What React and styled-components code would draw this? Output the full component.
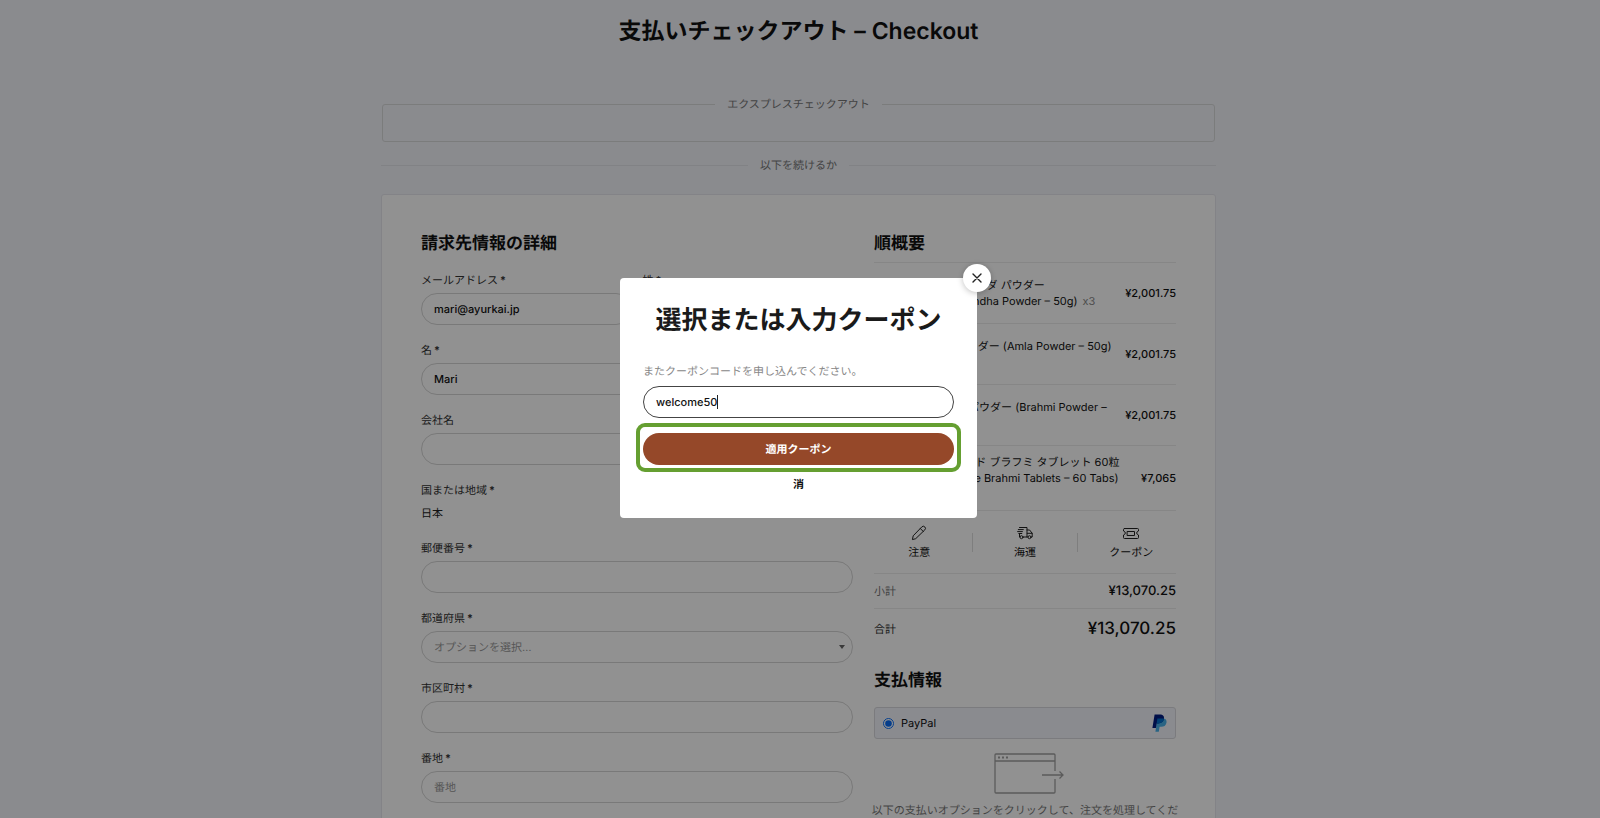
import React from 'react';
import styled, { createGlobalStyle } from 'styled-components';

const GlobalStyle = createGlobalStyle`
  *, *::before, *::after {
    box-sizing: border-box;
  }
  body {
    margin: 0;
    height: 100vh;
    overflow: hidden;
    background: #f2f4fa;
    color: #111;
    font-family: Inter, "Noto Sans CJK JP", sans-serif;
    font-size: 11px;
    line-height: 16px;
    text-rendering: geometricPrecision;
  }
  input, select, button {
    font: inherit;
    color: inherit;
    text-rendering: inherit;
  }
`;

const Page = styled.main`
  width: 100%;
  max-width: 838px;
  margin: 0 auto;
  padding: 12px 3px 0 0;
`;

const PageTitle = styled.h1`
  margin: 0 0 46px;
  font-size: 23px;
  line-height: 38px;
  font-weight: 600;
  text-align: center;
`;

const Express = styled.fieldset`
  margin: 0 1px;
  padding: 0;
  height: 46px;
  min-width: 0;
  border: 1px solid #d9dada;
  border-radius: 3px;
  color: #777;
`;

const Legend = styled.legend`
  margin: 0 auto;
  padding: 0 12px;
`;

const Or = styled.div`
  display: flex;
  align-items: center;
  gap: 12px;
  margin: 15px 0 21px;
  color: #777;

  &::before,
  &::after {
    content: '';
    flex: 1;
    border-top: 1px solid #e3e5ea;
  }
`;

const Card = styled.form`
  display: grid;
  grid-template-columns: 432fr 302fr;
  column-gap: 21px;
  padding: 36px 39px 40px;
  background: #fff;
  border: 1px solid #e6e7ee;
  border-radius: 3px;
`;

const Heading = styled.h2`
  margin: 0;
  font-size: 17px;
  line-height: 26px;
  font-weight: 600;
`;

const Fields = styled.div`
  display: grid;
  grid-template-columns: 1fr 1fr;
  gap: 17px 11px;
  margin-top: 15px;
`;

const Field = styled.div`
  display: flex;
  flex-direction: column;
  gap: 5px;
  grid-column: ${(props) => (props.$half ? 'auto' : '1 / -1')};
`;

const Label = styled.label`
  color: #333;
`;

const Required = styled.span`
  margin-left: 2px;
  font-weight: 600;
`;

const Input = styled.input`
  width: 100%;
  height: 32px;
  padding: 0 12px;
  background: transparent;
  border: 1px solid #d5d5d5;
  border-radius: 16px;
  outline: none;
  font-weight: 500;

  &::placeholder {
    color: #999;
    font-weight: 400;
  }
`;

const SelectBox = styled.div`
  display: grid;
  align-items: center;

  select, svg {
    grid-area: 1 / 1;
  }
  svg {
    justify-self: end;
    margin-right: 8px;
    pointer-events: none;
  }
`;

const Select = styled.select`
  width: 100%;
  height: 32px;
  padding: 0 12px;
  appearance: none;
  background: transparent;
  border: 1px solid #d5d5d5;
  border-radius: 16px;
  color: #999;
`;

const Country = styled.output`
  margin: 2px 0;
  color: #222;
`;

const Items = styled.ul`
  list-style: none;
  margin: 5px 0 0;
  padding: 0;
  border-top: 1px solid #ececec;
`;

const Item = styled.li`
  display: flex;
  align-items: center;
  gap: 3px;
  padding: 8px 0;
  border-bottom: 1px solid #ececec;
`;

const Thumb = styled.div`
  flex: none;
  width: 44px;
  height: 44px;
`;

const ItemName = styled.div`
  flex: 1;
  white-space: nowrap;
`;

const Qty = styled.span`
  margin-left: 5px;
  color: #888;
`;

const Price = styled.span`
  font-weight: 500;
  font-size: ${(props) => props.$size || 11}px;
`;

const Actions = styled.div`
  display: grid;
  grid-template-columns: repeat(3, 1fr);
  align-items: center;
  height: 62px;
  margin: 0 -8px 0 -7px;
`;

const Action = styled.button`
  display: flex;
  flex-direction: column;
  align-items: center;
  gap: 3px;
  padding: 0;
  background: none;
  border: 0;
`;

const ActionCell = styled.div`
  display: grid;
  grid-template-columns: 1fr auto;
  align-items: center;

  &:not(:last-child)::after {
    content: '';
    height: 19px;
    border-right: 1px solid #ddd;
  }
`;

const TotalRow = styled.div`
  display: flex;
  justify-content: space-between;
  align-items: center;
  height: ${(props) => (props.$grand ? 40 : 35)}px;
  border-top: 1px solid #ececec;
  color: #111;

  span:first-child {
    color: ${(props) => (props.$grand ? '#333' : '#777')};
  }
`;

const PaymentHeading = styled(Heading)`
  margin: 20px 0 13px;
`;

const Method = styled.label`
  display: flex;
  align-items: center;
  gap: 7px;
  height: 32px;
  padding: 0 8px;
  background: #f2f4fc;
  border: 1px solid #d9d9dd;
  border-radius: 3px;
  font-size: 11px;

  input {
    width: 11px;
    height: 11px;
    margin: 0;
    accent-color: #0a6cf5;
  }
  svg {
    margin-left: auto;
  }
`;

const Redirect = styled.div`
  margin: 14px -4px 0;
  text-align: center;
  color: #777;

  svg {
    display: block;
    margin: 0 auto 8px;
    overflow: visible;
  }
`;

const Overlay = styled.div`
  position: fixed;
  inset: 0;
  display: flex;
  align-items: center;
  justify-content: center;
  padding: 0 3px 22px 0;
  background: rgba(0, 0, 0, 0.43);
`;

const Modal = styled.div`
  position: relative;
  width: 357px;
  padding: 22px 23px 26px;
  background: #fff;
  border-radius: 4px;
`;

const ModalTitle = styled.h2`
  margin: 0 0 21px;
  color: #1a1a1a;
  font-size: 26px;
  line-height: 42px;
  font-weight: 600;
  text-align: center;
  white-space: nowrap;
`;

const CouponLabel = styled.label`
  display: block;
  margin: 0 0 7px;
  color: #888;
`;

const CouponBox = styled.div`
  display: flex;
  align-items: center;
  height: 32px;
  padding: 0 12px;
  border: 1px solid #444;
  border-radius: 16px;
`;

const CouponInput = styled.input`
  field-sizing: content;
  max-width: 100%;
  padding: 0;
  border: 0;
  outline: none;
  font-weight: 500;
`;

const Caret = styled.span`
  width: 1px;
  height: 14px;
  background: #222;
`;

const Highlight = styled.div`
  margin: 5px -7px 4px;
  padding: 6px 3px 3px;
  border: 4px solid #659f31;
  border-radius: 9px;
`;

const Apply = styled.button`
  display: block;
  width: 100%;
  height: 32px;
  padding: 0;
  border: 0;
  border-radius: 16px;
  background: #954829;
  color: #fff;
  font-weight: 700;
`;

const Clear = styled.button`
  display: block;
  margin: 0 auto;
  padding: 0;
  border: 0;
  background: none;
  color: #111;
  font-weight: 700;
`;

const Close = styled.button`
  position: absolute;
  top: -14px;
  right: -14px;
  display: flex;
  align-items: center;
  justify-content: center;
  width: 28px;
  height: 28px;
  padding: 0;
  border: 0;
  border-radius: 50%;
  background: #fff;
  box-shadow: 0 1px 6px rgba(0, 0, 0, 0.25);
`;

const Line = (props) => (
  <svg fill="none" stroke="#222" strokeLinecap="round" strokeLinejoin="round" {...props} />
);

const NoteIcon = () => (
  <Line width="16" height="16" viewBox="0 0 16 16">
    <path d="M1.500 14.200l.7-3.400 8.600-8.900a2.100 2.100 0 0 1 3 3L5 13.400zM9.300 3.500l3 3" />
  </Line>
);

const TruckIcon = () => (
  <Line width="16" height="16" viewBox="0 0 16 16">
    <path d="M2.5 2.5h7.5v9.500H6M10 5h2.600l2.600 3.300V12h-1.100M10 12h.900M10.200 8.300h5M2.500 9v3h.400M1.300 4.600h5M.600 6.600h4.800M1.800 8.500h3" />
    <circle cx="4.5" cy="12.2" r="1.5" />
    <circle cx="12.5" cy="12.2" r="1.5" />
  </Line>
);

const CouponIcon = () => (
  <Line width="16" height="16" viewBox="0 0 16 16">
    <path d="M1.500 3.500h13a1 1 0 0 1 1 1V6l-1.700 1.200v1.600L15.500 10v2.500a1 1 0 0 1-1 1h-13a1 1 0 0 1-1-1V10l1.700-1.200V7.200L.500 6V4.500a1 1 0 0 1 1-1z" />
    <path d="M4.500 6.500h7v4h-7z" />
  </Line>
);

const PayPalLogo = () => (
  <svg width="15" height="18" viewBox="0 0 15 18">
    <defs>
      <clipPath id="pp-front">
        <path d="M2.6.5h5.2c3.2 0 4.7 1.7 4.1 4.6-.6 3-2.7 4.3-5.7 4.3H4.7L3.9 14H.4z" />
      </clipPath>
    </defs>
    <path fill="#48b0e8" d="M5.400 4.500h5.200c3 0 4.400 1.500 3.900 4.200-.6 2.900-2.600 4.100-5.400 4.100H7.600l-.8 4.900H3.400z" />
    <path fill="#001c80" d="M2.6.5h5.2c3.2 0 4.7 1.7 4.1 4.6-.6 3-2.7 4.3-5.7 4.3H4.7L3.9 14H.4z" />
    <path fill="#0070cc" clipPath="url(#pp-front)" d="M5.400 4.500h5.200c3 0 4.400 1.500 3.900 4.200-.6 2.900-2.600 4.100-5.400 4.100H7.600l-.8 4.900H3.400z" />
  </svg>
);

const RedirectArt = () => (
  <svg width="62" height="41" viewBox="0 0 62 41" fill="none" stroke="#a0a0a0" strokeWidth="1.300">
    <path d="M61 18V2a1 1 0 0 0-1-1H2a1 1 0 0 0-1 1v37a1 1 0 0 0 1 1h58a1 1 0 0 0 1-1V26M1 8h60" />
    <path d="M48 22h21M65.500 18.500L69 22l-3.500 3.500" />
    <path d="M4 4.500h2M8 4.500h2M12 4.500h2" strokeWidth="2" />
  </svg>
);

const addressFields = [
  { id: 'postcode', label: '郵便番号' },
  { id: 'state', label: '都道府県', select: true },
  { id: 'city', label: '市区町村' },
  { id: 'street', label: '番地', placeholder: '番地' },
];

const items = [
  { lines: ['アシュワガンダ パウダー', '(Ashwagandha Powder – 50g)'], qty: 'x3', price: '¥2,001.75' },
  { lines: ['アムラ パウダー (Amla Powder – 50g)', ''], qty: 'x3', price: '¥2,001.75' },
  { lines: ['ブラフミ パウダー (Brahmi Powder –', '50g)'], qty: 'x3', price: '¥2,001.75' },
  { lines: ['ハーブグッド ブラフミ タブレット 60粒', '(Good Care Brahmi Tablets – 60 Tabs)', ''], qty: 'x3', price: '¥7,065' },
];

const actions = [
  { label: '注意', icon: <NoteIcon /> },
  { label: '海運', icon: <TruckIcon /> },
  { label: 'クーポン', icon: <CouponIcon /> },
];

const RequiredLabel = ({ children, ...props }) => (
  <Label {...props}>
    {children}
    <Required>*</Required>
  </Label>
);

const Billing = () => (
  <section>
    <Heading>請求先情報の詳細</Heading>
    <Fields>
      <Field $half>
        <RequiredLabel htmlFor="email">メールアドレス</RequiredLabel>
        <Input id="email" type="email" defaultValue="mari@ayurkai.jp" />
      </Field>
      <Field $half>
        <RequiredLabel htmlFor="last">姓</RequiredLabel>
        <Input id="last" />
      </Field>
      <Field>
        <RequiredLabel htmlFor="first">名</RequiredLabel>
        <Input id="first" defaultValue="Mari" />
      </Field>
      <Field>
        <Label htmlFor="company">会社名</Label>
        <Input id="company" />
      </Field>
      <Field>
        <RequiredLabel htmlFor="country">国または地域</RequiredLabel>
        <Country id="country">日本</Country>
      </Field>
      {addressFields.map((field) => (
        <Field key={field.id}>
          <RequiredLabel htmlFor={field.id}>{field.label}</RequiredLabel>
          {field.select ? (
            <SelectBox>
              <Select id={field.id}>
                <option>オプションを選択…</option>
              </Select>
              <svg width="6" height="4" viewBox="0 0 6 4"><path d="M0 0h6L3 4z" fill="#666" /></svg>
            </SelectBox>
          ) : (
            <Input id={field.id} placeholder={field.placeholder} />
          )}
        </Field>
      ))}
    </Fields>
  </section>
);

const Summary = () => (
  <section>
    <Heading>順概要</Heading>
    <Items>
      {items.map((item) => (
        <Item key={item.lines[0]}>
          <Thumb />
          <ItemName>
            {item.lines.map((line, i) => (
              <div key={i}>
                {line}
                {i === item.lines.length - 1 && <Qty>{item.qty}</Qty>}
              </div>
            ))}
          </ItemName>
          <Price>{item.price}</Price>
        </Item>
      ))}
    </Items>
    <Actions>
      {actions.map((action) => (
        <ActionCell key={action.label}>
          <Action type="button">
            {action.icon}
            {action.label}
          </Action>
        </ActionCell>
      ))}
    </Actions>
    <TotalRow>
      <span>小計</span>
      <Price $size={13}>¥13,070.25</Price>
    </TotalRow>
    <TotalRow $grand>
      <span>合計</span>
      <Price $size={17}>¥13,070.25</Price>
    </TotalRow>
    <PaymentHeading>支払情報</PaymentHeading>
    <Method>
      <input type="radio" name="payment" defaultChecked />
      PayPal
      <PayPalLogo />
    </Method>
    <Redirect>
      <RedirectArt />
      以下の支払いオプションをクリックして、注文を処理してください。
    </Redirect>
  </section>
);

const CouponModal = () => (
  <Overlay>
    <Modal role="dialog" aria-modal="true" aria-labelledby="coupon-title">
      <Close type="button" aria-label="閉じる">
        <Line width="10" height="10" viewBox="0 0 10 10" strokeWidth="1.4">
          <path d="M1 1l8 8M9 1L1 9" />
        </Line>
      </Close>
      <ModalTitle id="coupon-title">選択または入力クーポン</ModalTitle>
      <CouponLabel htmlFor="coupon">またクーポンコードを申し込んでください。</CouponLabel>
      <CouponBox>
        <CouponInput id="coupon" defaultValue="welcome50" />
        <Caret />
      </CouponBox>
      <Highlight>
        <Apply type="button">適用クーポン</Apply>
      </Highlight>
      <Clear type="button">消</Clear>
    </Modal>
  </Overlay>
);

const App = () => (
  <>
    <GlobalStyle />
    <Page>
      <PageTitle>支払いチェックアウト – Checkout</PageTitle>
      <Express>
        <Legend>エクスプレスチェックアウト</Legend>
      </Express>
      <Or>以下を続けるか</Or>
      <Card>
        <Billing />
        <Summary />
      </Card>
    </Page>
    <CouponModal />
  </>
);

export default App;
